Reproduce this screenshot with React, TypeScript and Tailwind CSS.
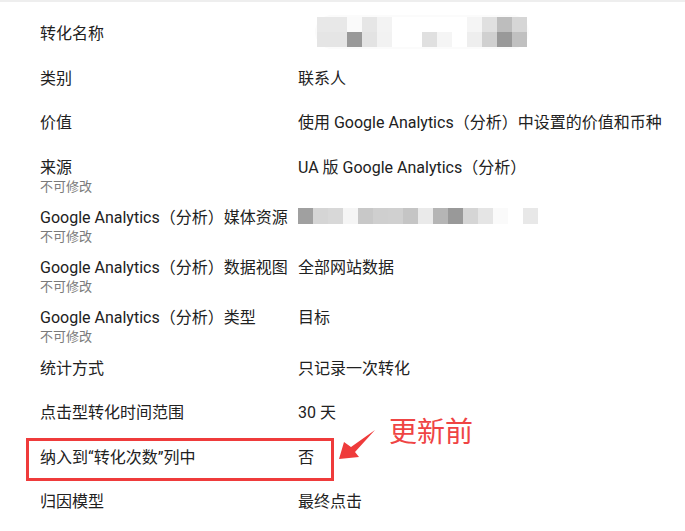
const mosaicTop: string[][] = [
  ["#e8e8e8", "#e8e8e8", "#fafafa", "#e6e6e6", "#f3f3f3", "#ffffff", "#ffffff", "#ffffff", "#ffffff", "#ffffff", "#f5f5f5", "#e0e0e0", "#bdbdbd", "#d6d6d6"],
  ["#e5e5e5", "#e5e5e5", "#999999", "#e3e3e3", "#f2f2f2", "#ffffff", "#ffffff", "#e0e0e0", "#f5f5f5", "#ffffff", "#eeeeee", "#d0d0d0", "#999999", "#c0c0c0"],
];

const mosaicProp: string[] = [
  "#a0a0a0", "#d5d5d5", "#d8d8d8", "#f5f5f5", "#c8c8c8", "#cfcfcf", "#d0d0d0", "#c5c5c5",
  "#eaeaea", "#b5b5b5", "#999999", "#d5d5d5", "#e5e5e5", "#fafafa", "#ffffff", "#e8e8e8",
];

function MosaicName() {
  return (
    <div className="flex flex-col -mt-[9px] ml-[17px] p-[2px] rounded-full bg-[#fbfbfb]">
      {mosaicTop.map((row, r) => (
        <div key={r} className="flex">
          {row.map((c, i) => (
            <div key={i} className="w-[15px] h-[15px]" style={{ background: c }} />
          ))}
        </div>
      ))}
    </div>
  );
}

function MosaicProperty() {
  return (
    <div className="flex">
      {mosaicProp.map((c, i) => (
        <div key={i} className="w-[15px] h-[16px]" style={{ background: c }} />
      ))}
    </div>
  );
}

interface Row {
  label: string;
  value: React.ReactNode;
  locked?: boolean;
}

const rows: Row[] = [
  { label: "转化名称", value: <MosaicName /> },
  { label: "类别", value: "联系人" },
  { label: "价值", value: "使用 Google Analytics（分析）中设置的价值和币种" },
  { label: "来源", value: "UA 版 Google Analytics（分析）", locked: true },
  { label: "Google Analytics（分析）媒体资源", value: <MosaicProperty />, locked: true },
  { label: "Google Analytics（分析）数据视图", value: "全部网站数据", locked: true },
  { label: "Google Analytics（分析）类型", value: "目标", locked: true },
  { label: "统计方式", value: "只记录一次转化" },
  { label: "点击型转化时间范围", value: "30 天" },
  { label: "纳入到“转化次数”列中", value: "否" },
  { label: "归因模型", value: "最终点击" },
];

export default function App() {
  return (
    <div
      className="relative w-[685px] h-[531px] overflow-hidden bg-white border-t-2 border-[#eeeeee] text-[#212121]"
      style={{ fontFamily: 'Roboto, "Noto Sans CJK SC", sans-serif' }}
    >
      <div className="pt-[10px] pl-[40px]">
        {rows.map((row) => (
          <div
            key={row.label}
            className={`flex items-start pt-[12px] ${row.locked ? "h-[50.25px]" : "h-[44.5px]"}`}
          >
            <div className="w-[258px] shrink-0">
              <div className="text-[16px] leading-[20px] whitespace-nowrap">{row.label}</div>
              {row.locked && (
                <div className="text-[13px] leading-[17px] text-[#7a7a7a]">不可修改</div>
              )}
            </div>
            <div className="text-[16px] leading-[20px] whitespace-nowrap">{row.value}</div>
          </div>
        ))}
      </div>

      {/* annotation */}
      <div className="absolute left-[26px] top-[436px] w-[308px] h-[43px] border-[3px] border-[#ef3b3b]" />
      <svg className="absolute left-0 top-0" width="685" height="531" aria-hidden="true">
        <polygon
          points="339,457 344,440 351,445 375,428 355,450 359,455"
          fill="#ef3b3b"
        />
      </svg>
      <div
        className="absolute left-[389px] top-[414px] text-[28px] leading-none text-[#ef4444]"
        style={{ fontFamily: '"Noto Sans CJK SC", sans-serif' }}
      >
        更新前
      </div>
    </div>
  );
}
